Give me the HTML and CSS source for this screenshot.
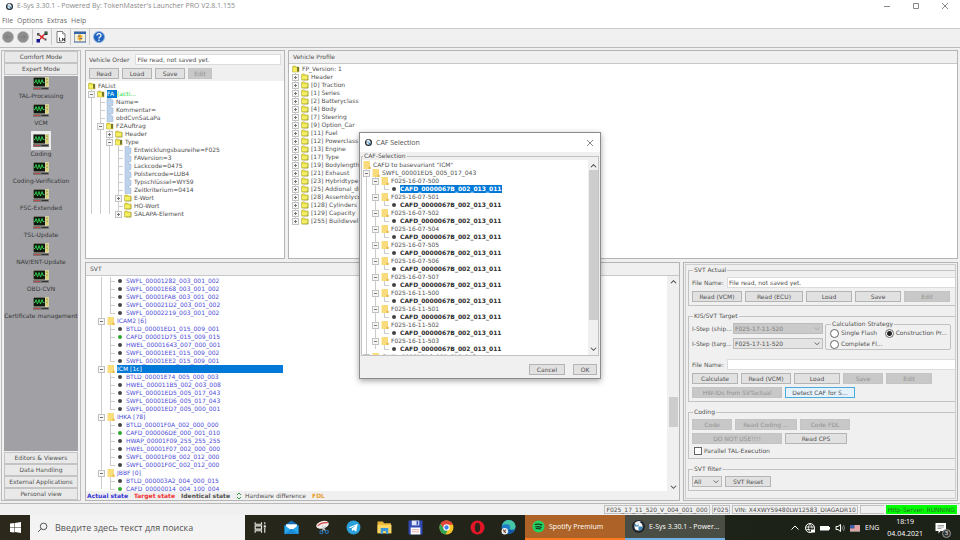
FILE: index.html
```html
<!DOCTYPE html>
<html lang="en">

<head>
    <meta charset="UTF-8">
    <meta name="viewport" content="width=device-width, initial-scale=1.0">
    <title>E-Sys 3.30.1</title>
    <link rel="stylesheet" href="styles.css">
</head>

<body>
    <!-- Shared icons -->
    <svg class="sprites" width="0" height="0" aria-hidden="true">
        <symbol id="bmw" viewBox="0 0 16 16">
            <circle cx="8" cy="8" r="8" fill="#20262c"/>
            <circle cx="8" cy="8" r="5" fill="#fff"/>
            <path d="M8 8V3a5 5 0 0 0-5 5zM8 8v5a5 5 0 0 0 5-5z" fill="#3f86b8"/>
            <path d="M3 4q4-4 8-2L6 7z" fill="#e8eef2"/>
        </symbol>
        <symbol id="folder" viewBox="0 0 16 14">
            <path d="M1 3l1-2h5l1 2h6v10H1z" fill="#e6dc3c" stroke="#a9a23a"/>
            <path d="M2 5h11v7H2z" fill="#f4ee62"/>
            <path d="M14 4v9H3" fill="none" stroke="#8a8530"/>
        </symbol>
        <symbol id="opened" viewBox="0 0 16 14">
            <path d="M1 3l1-2h5l1 2h6v10H1z" fill="#e6dc3c" stroke="#a9a23a"/>
            <path d="M2 5h8v7H2z" fill="#f4ee62"/>
            <path d="M10 3h4v9h-4z" fill="#77782c"/>
        </symbol>
        <symbol id="yfolder" viewBox="0 0 14 16">
            <path d="M0 0h13v12h1v4H0z" fill="#fbdc7c"/>
            <path d="M10 11h4v5h-4z" fill="#e3b851"/>
        </symbol>
        <symbol id="doc" viewBox="0 0 14 16">
            <path d="M1 1h8l4 4v10H1z" fill="#bdd2ec" stroke="#9ab0cc"/>
            <path d="M9 1v4h4" fill="#f4f8fc" stroke="#9ab0cc"/>
        </symbol>
        <symbol id="dot" viewBox="0 0 14 16">
            <circle cx="7" cy="8" r="4" fill="currentColor"/>
        </symbol>
        <symbol id="scope" viewBox="0 0 32 26">
            <path d="M0 0h32v26H0z" fill="#d5d0c2"/>
            <path d="M1 1h23v18H1z" fill="#101810"/>
            <path d="M2 11h2l2-6 3 9 3-9 3 9 3-9 2 6h3" fill="none" stroke="#2fc74c" stroke-width="2"/>
            <path d="M25 1h6v18h-6z" fill="#d9d577"/>
            <path d="M27 3h2v3h-2zM27 9h2v3h-2z" fill="#8c8a50"/>
            <path d="M0 20h32v6H0z" fill="#777"/>
            <path d="M2 22h12v2H2z" fill="#c14646"/>
            <path d="M17 22h13v2H17z" fill="#333"/>
        </symbol>
        <symbol id="up" viewBox="0 0 8 8"><path d="M1 6l3-3 3 3" fill="none" stroke="#444" stroke-width="1.2"/></symbol>
        <symbol id="down" viewBox="0 0 8 8"><path d="M1 2l3 3 3-3" fill="none" stroke="#555" stroke-width="1.2"/></symbol>
    </svg>

    <header class="titlebar">
        <svg class="app-icon"><use href="#bmw"/></svg>
        <h1>E-Sys 3.30.1 - Powered By: TokenMaster's Launcher PRO V2.8.1.155</h1>
        <div class="window-buttons">
            <button aria-label="Minimize"><svg viewBox="0 0 8 8"><path d="M1 4.5h6"/></svg></button>
            <button aria-label="Maximize"><svg viewBox="0 0 8 8"><path d="M1.5 1.5h5v5h-5z"/></svg></button>
            <button aria-label="Close"><svg viewBox="0 0 8 8"><path d="M1 1l6 6M7 1L1 7"/></svg></button>
        </div>
    </header>

    <nav class="menu">
        <a href="#">File</a>
        <a href="#">Options</a>
        <a href="#">Extras</a>
        <a href="#">Help</a>
    </nav>

    <div class="toolbar">
        <button aria-label="Back"><svg viewBox="0 0 24 24"><circle cx="12" cy="12" r="11" fill="#8d8d8d" stroke="#a2a2a2"/><path d="M17 12H7m4-4l-4 4 4 4" fill="none" stroke="#7c7c7c" stroke-width="2"/></svg></button>
        <button aria-label="Forward"><svg viewBox="0 0 24 24"><circle cx="12" cy="12" r="11" fill="#8d8d8d" stroke="#a2a2a2"/><path d="M7 12h10m-4-4l4 4-4 4" fill="none" stroke="#7c7c7c" stroke-width="2"/></svg></button>
        <span class="divider"></span>
        <button aria-label="Connect"><svg viewBox="0 0 24 24"><path d="M4 7l15 10M5 20L20 4" stroke="#333" stroke-width="1.5"/><path d="M7 8l9 8M16 7l-8 9" stroke="#e02020" stroke-width="2.5"/><path d="M1 16h7v7H1z" fill="#16168c"/><path d="M17 1h6v7h-6z" fill="#222"/><path d="M18 3h4v2h-4z" fill="#3ab06a"/><path d="M2 4h5v5H2zM17 15h4v4h-4z" fill="#555"/></svg></button>
        <span class="divider"></span>
        <button aria-label="Log file"><svg viewBox="0 0 24 24"><path d="M4 1h11l5 5v17H4z" fill="#fff" stroke="#555" stroke-width="1.5"/><path d="M15 1v5h5" fill="#ccc" stroke="#555"/><path d="M9 13v7h4M15 20v-6l4 6v-6" fill="none" stroke="#222" stroke-width="1.5"/></svg></button>
        <span class="divider"></span>
        <button aria-label="Transfer"><svg viewBox="0 0 24 24"><path d="M0 2h24v20H0z" fill="#f5f0d8" stroke="#345c96" stroke-width="2"/><path d="M0 2h24v4H0z" fill="#3467aa"/><path d="M12 6l6 6h-3v2h3l-6 6-6-6h3v-2H6z" fill="#eda321"/><path d="M8 10h3M13 15h3" stroke="#3467aa" stroke-width="2"/></svg></button>
        <span class="divider"></span>
        <button aria-label="Help"><svg viewBox="0 0 24 24"><circle cx="12" cy="12" r="11" fill="#2063bd" stroke="#8fb4e2" stroke-width="2"/><path d="M8 9q0-4 4-4t4 4q0 2-2 3t-2 3M12 17v3" fill="none" stroke="#fff" stroke-width="2.5"/></svg></button>
    </div>

    <main class="workspace">
        <!-- Left navigation -->
        <aside class="sidebar">
            <button class="mode">Comfort Mode</button>
            <button class="mode">Expert Mode</button>
            <div class="modules">
                <button class="module"><svg><use href="#scope"/></svg>TAL-Processing</button>
                <button class="module"><svg><use href="#scope"/></svg>VCM</button>
                <button class="module active"><span><svg><use href="#scope"/></svg></span>Coding</button>
                <button class="module"><svg><use href="#scope"/></svg>Coding-Verification</button>
                <button class="module"><svg><use href="#scope"/></svg>FSC-Extended</button>
                <button class="module"><svg><use href="#scope"/></svg>TSL-Update</button>
                <button class="module"><svg><use href="#scope"/></svg>NAV/ENT-Update</button>
                <button class="module"><svg><use href="#scope"/></svg>OBD-CVN</button>
                <button class="module"><svg><use href="#scope"/></svg>Certificate management</button>
            </div>
            <button class="mode">Editors &amp; Viewers</button>
            <button class="mode">Data Handling</button>
            <button class="mode">External Applications</button>
            <button class="mode">Personal view</button>
        </aside>

        <div class="panels">
            <div class="top-panels">
                <section class="panel">
                    <div class="order">
                        <div class="line">
                            <label for="order">Vehicle Order</label>
                            <input id="order" type="text" value="File read, not saved yet.">
                        </div>
                        <div class="line">
                            <button class="btn w30">Read</button>
                            <button class="btn w30">Load</button>
                            <button class="btn w30">Save</button>
                            <button class="btn w24" disabled>Edit</button>
                        </div>
                    </div>
                    <div class="tree fa-tree">
                        <div class="node root"><svg><use href="#opened"/></svg>FAList</div>
                        <ul>
                            <li>
                                <div class="node open"><svg><use href="#opened"/></svg><b class="picked">FA</b><span class="note">[acti...</span></div>
                                <ul>
                                    <li><div class="node"><svg><use href="#doc"/></svg>Name=</div></li>
                                    <li><div class="node"><svg><use href="#doc"/></svg>Kommentar=</div></li>
                                    <li><div class="node"><svg><use href="#doc"/></svg>obdCvnSaLaPa</div></li>
                                    <li>
                                        <div class="node open"><svg><use href="#opened"/></svg>FZAuftrag</div>
                                        <ul>
                                            <li><div class="node closed"><svg><use href="#folder"/></svg>Header</div></li>
                                            <li>
                                                <div class="node open"><svg><use href="#opened"/></svg>Type</div>
                                                <ul>
                                                    <li><div class="node"><svg><use href="#doc"/></svg>Entwicklungsbaureihe=F025</div></li>
                                                    <li><div class="node"><svg><use href="#doc"/></svg>FAVersion=3</div></li>
                                                    <li><div class="node"><svg><use href="#doc"/></svg>Lackcode=0475</div></li>
                                                    <li><div class="node"><svg><use href="#doc"/></svg>Polstercode=LUB4</div></li>
                                                    <li><div class="node"><svg><use href="#doc"/></svg>Typschlüssel=WY59</div></li>
                                                    <li><div class="node"><svg><use href="#doc"/></svg>Zeitkriterium=0414</div></li>
                                                    <li><div class="node closed"><svg><use href="#folder"/></svg>E-Wort</div></li>
                                                    <li><div class="node"><svg><use href="#folder"/></svg>HO-Wort</div></li>
                                                    <li><div class="node closed"><svg><use href="#folder"/></svg>SALAPA-Element</div></li>
                                                </ul>
                                            </li>
                                        </ul>
                                    </li>
                                </ul>
                            </li>
                        </ul>
                    </div>
                </section>

                <section class="panel">
                    <h2>Vehicle Profile</h2>
                    <div class="tree profile-tree">
                        <div class="node root"><svg><use href="#opened"/></svg>FP_Version: 1</div>
                        <ul>
                            <li><div class="node closed"><svg><use href="#folder"/></svg>Header</div></li>
                            <li><div class="node closed"><svg><use href="#folder"/></svg>[0] Traction</div></li>
                            <li><div class="node closed"><svg><use href="#folder"/></svg>[1] Series</div></li>
                            <li><div class="node closed"><svg><use href="#folder"/></svg>[2] Batteryclass</div></li>
                            <li><div class="node closed"><svg><use href="#folder"/></svg>[4] Body</div></li>
                            <li><div class="node closed"><svg><use href="#folder"/></svg>[7] Steering</div></li>
                            <li><div class="node closed"><svg><use href="#folder"/></svg>[9] Option_Car</div></li>
                            <li><div class="node closed"><svg><use href="#folder"/></svg>[11] Fuel</div></li>
                            <li><div class="node closed"><svg><use href="#folder"/></svg>[12] Powerclass</div></li>
                            <li><div class="node closed"><svg><use href="#folder"/></svg>[13] Engine</div></li>
                            <li><div class="node closed"><svg><use href="#folder"/></svg>[17] Type</div></li>
                            <li><div class="node closed"><svg><use href="#folder"/></svg>[19] Bodylength</div></li>
                            <li><div class="node closed"><svg><use href="#folder"/></svg>[21] Exhaust</div></li>
                            <li><div class="node closed"><svg><use href="#folder"/></svg>[23] Hybridtype</div></li>
                            <li><div class="node closed"><svg><use href="#folder"/></svg>[25] Addional_dif</div></li>
                            <li><div class="node closed"><svg><use href="#folder"/></svg>[28] Assemblycou</div></li>
                            <li><div class="node closed"><svg><use href="#folder"/></svg>[128] Cylinders</div></li>
                            <li><div class="node closed"><svg><use href="#folder"/></svg>[129] Capacity</div></li>
                            <li><div class="node closed"><svg><use href="#folder"/></svg>[255] Buildlevel</div></li>
                        </ul>
                    </div>
                </section>
            </div>

            <div class="bottom-panels">
                <section class="panel">
                    <h2>SVT</h2>
                    <div class="scroller">
                        <div class="tree svt-tree">
                            <ul>
                                <li>
                                    <ul>
                                        <li><div class="node"><svg><use href="#dot"/></svg>SWFL_00001282_003_001_002</div></li>
                                        <li><div class="node"><svg><use href="#dot"/></svg>SWFL_00001E68_003_001_002</div></li>
                                        <li><div class="node"><svg><use href="#dot"/></svg>SWFL_00001FAB_003_001_002</div></li>
                                        <li><div class="node"><svg><use href="#dot"/></svg>SWFL_000021D2_003_001_002</div></li>
                                        <li><div class="node"><svg><use href="#dot"/></svg>SWFL_00002219_003_001_002</div></li>
                                    </ul>
                                </li>
                                <li>
                                    <div class="node open"><svg><use href="#yfolder"/></svg>ICAM2 [6]</div>
                                    <ul>
                                        <li><div class="node"><svg><use href="#dot"/></svg>BTLD_00001ED1_015_009_001</div></li>
                                        <li><div class="node"><svg class="green"><use href="#dot"/></svg>CAFD_00001D75_015_009_015</div></li>
                                        <li><div class="node"><svg><use href="#dot"/></svg>HWEL_00001643_007_000_001</div></li>
                                        <li><div class="node"><svg><use href="#dot"/></svg>SWFL_00001EE1_015_009_002</div></li>
                                        <li><div class="node"><svg><use href="#dot"/></svg>SWFL_00001EE2_015_009_001</div></li>
                                    </ul>
                                </li>
                                <li>
                                    <div class="node open"><svg><use href="#yfolder"/></svg><b class="picked wide">ICM [1c]</b></div>
                                    <ul>
                                        <li><div class="node"><svg><use href="#dot"/></svg>BTLD_00001E74_005_000_003</div></li>
                                        <li><div class="node"><svg><use href="#dot"/></svg>HWEL_000011B5_002_003_008</div></li>
                                        <li><div class="node"><svg><use href="#dot"/></svg>SWFL_00001ED5_005_017_043</div></li>
                                        <li><div class="node"><svg><use href="#dot"/></svg>SWFL_00001ED6_005_017_043</div></li>
                                        <li><div class="node"><svg><use href="#dot"/></svg>SWFL_00001ED7_005_000_001</div></li>
                                    </ul>
                                </li>
                                <li>
                                    <div class="node open"><svg><use href="#yfolder"/></svg>IHKA [78]</div>
                                    <ul>
                                        <li><div class="node"><svg><use href="#dot"/></svg>BTLD_00001F0A_002_000_000</div></li>
                                        <li><div class="node"><svg class="green"><use href="#dot"/></svg>CAFD_000006DE_000_001_010</div></li>
                                        <li><div class="node"><svg><use href="#dot"/></svg>HWAP_00001F09_255_255_255</div></li>
                                        <li><div class="node"><svg><use href="#dot"/></svg>HWEL_00001F07_002_000_000</div></li>
                                        <li><div class="node"><svg><use href="#dot"/></svg>SWFL_00001F0B_002_012_000</div></li>
                                        <li><div class="node"><svg><use href="#dot"/></svg>SWFL_00001F0C_002_012_000</div></li>
                                    </ul>
                                </li>
                                <li>
                                    <div class="node open"><svg><use href="#yfolder"/></svg>JBBF [0]</div>
                                    <ul>
                                        <li><div class="node"><svg><use href="#dot"/></svg>BTLD_000003A2_004_000_015</div></li>
                                        <li><div class="node"><svg class="green"><use href="#dot"/></svg>CAFD_00000014_004_100_004</div></li>
                                    </ul>
                                </li>
                            </ul>
                        </div>
                        <div class="scrollbar svt-bar">
                            <svg><use href="#up"/></svg>
                            <span class="thumb"></span>
                            <svg><use href="#down"/></svg>
                        </div>
                    </div>
                    <div class="legend">
                        <b class="actual">Actual state</b>
                        <b class="target">Target state</b>
                        <b>Identical state</b>
                        <span><svg viewBox="0 0 12 16"><path d="M2 6l4-4 4 4M2 10l4 4 4-4" fill="none" stroke="#2c9a3a" stroke-width="2"/></svg>Hardware difference</span>
                        <b class="fdl">FDL</b>
                    </div>
                </section>

                <section class="panel settings">
                    <fieldset>
                        <legend>SVT Actual</legend>
                        <div class="line">
                            <label class="name" for="actual-file">File Name:</label>
                            <input id="actual-file" type="text" value="File read, not saved yet.">
                        </div>
                        <div class="line">
                            <button class="btn w50">Read (VCM)</button>
                            <button class="btn w58">Read (ECU)</button>
                            <button class="btn w46">Load</button>
                            <button class="btn w46">Save</button>
                            <button class="btn w46" disabled>Edit</button>
                        </div>
                    </fieldset>

                    <fieldset>
                        <legend>KIS/SVT Target</legend>
                        <div class="steps">
                            <div class="step-list">
                                <div class="line">
                                    <label class="step" for="ship">I-Step (ship...</label>
                                    <span class="select off"><select id="ship" disabled><option>F025-17-11-520</option></select><svg><use href="#down"/></svg></span>
                                </div>
                                <div class="line">
                                    <label class="step" for="targ">I-Step (targ...</label>
                                    <span class="select"><select id="targ"><option>F025-17-11-520</option></select><svg><use href="#down"/></svg></span>
                                </div>
                            </div>
                            <fieldset class="strategy">
                                <legend>Calculation Strategy</legend>
                                <label><input type="radio" name="strategy">Single Flash</label>
                                <label><input type="radio" name="strategy" checked>Construction Pr...</label>
                                <label><input type="radio" name="strategy">Complete Fl...</label>
                            </fieldset>
                        </div>
                        <div class="line">
                            <label class="name" for="target-file">File Name:</label>
                            <input id="target-file" type="text">
                        </div>
                        <div class="line">
                            <button class="btn w46">Calculate</button>
                            <button class="btn w50">Read (VCM)</button>
                            <button class="btn w46">Load</button>
                            <button class="btn w40" disabled>Save</button>
                            <button class="btn w46" disabled>Edit</button>
                        </div>
                        <div class="line">
                            <button class="btn w90" disabled>HW-IDs from SVTactual</button>
                            <button class="btn w70 hot">Detect CAF for S...</button>
                        </div>
                    </fieldset>

                    <fieldset>
                        <legend>Coding</legend>
                        <div class="line">
                            <button class="btn w40" disabled>Code</button>
                            <button class="btn w62" disabled>Read Coding ...</button>
                            <button class="btn w50" disabled>Code FDL</button>
                        </div>
                        <div class="line">
                            <button class="btn w90" disabled>DO NOT USE!!!!</button>
                            <button class="btn w62">Read CPS</button>
                        </div>
                        <label class="check"><input type="checkbox">Parallel TAL-Execution</label>
                    </fieldset>

                    <fieldset>
                        <legend>SVT filter</legend>
                        <div class="line">
                            <span class="select w30"><select aria-label="SVT filter"><option>All</option></select><svg><use href="#down"/></svg></span>
                            <button class="btn w46">SVT Reset</button>
                        </div>
                    </fieldset>
                </section>
            </div>
        </div>
    </main>

    <footer class="statusbar">
        <span>F025_17_11_520_V_004_001_000</span>
        <span>F025</span>
        <span>VIN: X4XWY59480LW12583_DIAGADR10</span>
        <span class="blank"></span>
        <span class="server">Http-Server: RUNNING</span>
    </footer>

    <!-- Windows taskbar -->
    <div class="taskbar">
        <button class="start" aria-label="Start"><svg viewBox="0 0 22 22"><path d="M0 3l9-1v9H0zM10 2l12-2v11H10zM0 12h9v9l-9-1zM10 12h12v10l-12-2z" fill="#fff"/></svg></button>
        <label class="search">
            <svg viewBox="0 0 20 20"><circle cx="12" cy="8" r="6" fill="none" stroke="#333" stroke-width="1.5"/><path d="M8 12l-6 6" stroke="#333" stroke-width="1.5"/></svg>
            <input type="text" placeholder="Введите здесь текст для поиска">
        </label>
        <div class="apps">
            <button aria-label="Task view"><svg viewBox="0 0 28 28"><path d="M4 4v4h12V4M4 24v-4h12v4M4 11h12v6H4zM22 4v4M22 15v9" fill="none" stroke="#eee" stroke-width="2"/><path d="M20 10h4v4h-4z" fill="#eee"/></svg></button>
            <button aria-label="Mail"><svg viewBox="0 0 28 28"><path d="M1 10L14 1l13 9v16H1z" fill="#1470b8"/><path d="M4 8h20v9H4z" fill="#fff"/><path d="M1 10l13 9 13-9v16H1z" fill="#27a8ec"/><path d="M1 26l13-9 13 9z" fill="#1c8bd6"/></svg></button>
            <button aria-label="Snipping tool"><svg viewBox="0 0 28 28"><ellipse cx="14" cy="9" rx="12" ry="7" fill="#f2eeee" transform="rotate(-15 14 9)"/><path d="M5 11Q12 4 24 5" fill="none" stroke="#d34040" stroke-width="2"/><path d="M13 10l7 11M20 11l-7 10" stroke="#ccc" stroke-width="2"/><circle cx="12" cy="23" r="3" fill="none" stroke="#2878bd" stroke-width="2"/><circle cx="22" cy="22" r="3" fill="none" stroke="#2878bd" stroke-width="2"/></svg></button>
            <button aria-label="Telegram"><svg viewBox="0 0 28 28"><circle cx="14" cy="14" r="13" fill="#2aa0dc"/><path d="M5 14l17-7-3 15-5-4-3 3v-5l8-6-10 5z" fill="#fff"/></svg></button>
            <button aria-label="Explorer"><svg viewBox="0 0 28 28"><path d="M1 3h10l2 3h13v18H1z" fill="#eab637"/><path d="M1 9h26v16H1z" fill="#fcd662"/><path d="M7 15h14v11h-4v-5h-6v5H7z" fill="#3a97dc"/></svg></button>
            <button aria-label="Total Commander"><svg viewBox="0 0 28 28"><path d="M1 1h26v26H1z" fill="#3149b5"/><path d="M7 1h14v9H7z" fill="#dfe5f4"/><path d="M16 2h3v7h-3z" fill="#3149b5"/><path d="M5 14h18v13H5z" fill="#fff"/><path d="M7 18h14M7 22h14" stroke="#d66"/></svg></button>
            <button aria-label="Chrome"><svg viewBox="0 0 28 28"><circle cx="14" cy="14" r="13" fill="#f4c527"/><path d="M3 7a13 13 0 0 1 23 2H14L9 17z" fill="#e2443a"/><path d="M3 7l6 10 7 3-4 7A13 13 0 0 1 3 7z" fill="#35a354"/><circle cx="14" cy="14" r="6" fill="#fff"/><circle cx="14" cy="14" r="4" fill="#4080e8"/></svg></button>
            <button aria-label="Opera"><svg viewBox="0 0 28 28"><circle cx="14" cy="14" r="13" fill="#e31627"/><ellipse cx="14" cy="14" rx="5" ry="9" fill="#2a261b"/></svg></button>
            <button aria-label="Edge"><svg viewBox="0 0 28 28"><circle cx="14" cy="13" r="13" fill="#1d7ec9"/><path d="M2 10Q6 0 15 0c8 0 13 7 12 13-1 5-7 6-11 4 3-5 0-9-5-9-4 0-7 1-9 2z" fill="#45c7a5"/><path d="M15 17q5 4 11 1-4 8-12 8z" fill="#1254a0"/><circle cx="7" cy="21" r="6" fill="#eee"/><path d="M4 18l5 6M9 18l-4 5" stroke="#774f3d" stroke-width="2"/></svg></button>
        </div>
        <button class="task spotify"><svg viewBox="0 0 28 28"><circle cx="14" cy="14" r="13" fill="#20d362"/><path d="M6 10q8-3 16 1M7 15q7-2 14 1M8 19q6-2 11 1" fill="none" stroke="#183d22" stroke-width="2.5"/></svg>Spotify Premium</button>
        <button class="task esys"><svg><use href="#bmw"/></svg>E-Sys 3.30.1 - Power...</button>
        <div class="tray">
            <svg viewBox="0 0 20 20"><path d="M3 13l7-7 7 7" fill="none" stroke="#fff" stroke-width="2"/></svg>
            <svg viewBox="0 0 20 20"><circle cx="10" cy="10" r="9" fill="none" stroke="#fff" stroke-width="2"/><path d="M2 8h16M2 13h9M10 2q-7 8 0 16M10 2q5 4 4 9" fill="none" stroke="#fff" stroke-width="1.5"/><path d="M12 13h8v6h-8z" fill="#fff"/></svg>
            <svg viewBox="0 0 20 20"><path d="M0 6h18v9H0zM18 8h2v5h-2z" fill="#fff"/></svg>
            <svg viewBox="0 0 20 20"><path d="M2 7h4l5-4v14l-5-4H2z" fill="none" stroke="#fff" stroke-width="2"/><path d="M14 7q2 3 0 6M17 4q4 6 0 12" fill="none" stroke="#aaa" stroke-width="1.5"/></svg>
            <svg viewBox="0 0 20 20"><path d="M0 4h20v13H0z" fill="#eee"/><path d="M0 6h20M0 10h20M0 14h20" stroke="#d65757" stroke-width="2"/><path d="M0 4h9v7H0z" fill="#3d5fa8"/></svg>
            <span>ENG</span>
            <time>18:19<br>04.04.2021</time>
            <button class="notices" aria-label="Notifications"><svg viewBox="0 0 24 24"><path d="M1 2h21v16H11l-4 5v-5H1z" fill="#fff"/><path d="M5 7h13M5 10h13M5 13h8" stroke="#444"/></svg><span class="badge">3</span></button>
        </div>
    </div>

    <!-- CAF selection window -->
    <div class="dialog" role="dialog" aria-labelledby="caf-title">
        <div class="dialog-title">
            <svg class="app-icon"><use href="#bmw"/></svg>
            <h2 id="caf-title">CAF Selection</h2>
            <button aria-label="Close"><svg viewBox="0 0 8 8"><path d="M1 1l6 6M7 1L1 7"/></svg></button>
        </div>
        <fieldset>
            <legend>CAF-Selection</legend>
            <div class="scroller">
                <div class="tree caf-tree">
                    <div class="node root"><svg><use href="#yfolder"/></svg>CAFD to basevariant "ICM"</div>
                    <ul>
                        <li>
                            <div class="node open"><svg><use href="#yfolder"/></svg>SWFL_00001ED5_005_017_043</div>
                            <ul>
                                <li>
                                    <div class="node open"><svg><use href="#yfolder"/></svg>F025-16-07-500</div>
                                    <ul><li><div class="node"><svg><use href="#dot"/></svg><b class="picked">CAFD_0000067B_002_013_011</b></div></li></ul>
                                </li>
                                <li>
                                    <div class="node open"><svg><use href="#yfolder"/></svg>F025-16-07-501</div>
                                    <ul><li><div class="node"><svg><use href="#dot"/></svg><b>CAFD_0000067B_002_013_011</b></div></li></ul>
                                </li>
                                <li>
                                    <div class="node open"><svg><use href="#yfolder"/></svg>F025-16-07-502</div>
                                    <ul><li><div class="node"><svg><use href="#dot"/></svg><b>CAFD_0000067B_002_013_011</b></div></li></ul>
                                </li>
                                <li>
                                    <div class="node open"><svg><use href="#yfolder"/></svg>F025-16-07-504</div>
                                    <ul><li><div class="node"><svg><use href="#dot"/></svg><b>CAFD_0000067B_002_013_011</b></div></li></ul>
                                </li>
                                <li>
                                    <div class="node open"><svg><use href="#yfolder"/></svg>F025-16-07-505</div>
                                    <ul><li><div class="node"><svg><use href="#dot"/></svg><b>CAFD_0000067B_002_013_011</b></div></li></ul>
                                </li>
                                <li>
                                    <div class="node open"><svg><use href="#yfolder"/></svg>F025-16-07-506</div>
                                    <ul><li><div class="node"><svg><use href="#dot"/></svg><b>CAFD_0000067B_002_013_011</b></div></li></ul>
                                </li>
                                <li>
                                    <div class="node open"><svg><use href="#yfolder"/></svg>F025-16-07-507</div>
                                    <ul><li><div class="node"><svg><use href="#dot"/></svg><b>CAFD_0000067B_002_013_011</b></div></li></ul>
                                </li>
                                <li>
                                    <div class="node open"><svg><use href="#yfolder"/></svg>F025-16-11-500</div>
                                    <ul><li><div class="node"><svg><use href="#dot"/></svg><b>CAFD_0000067B_002_013_011</b></div></li></ul>
                                </li>
                                <li>
                                    <div class="node open"><svg><use href="#yfolder"/></svg>F025-16-11-501</div>
                                    <ul><li><div class="node"><svg><use href="#dot"/></svg><b>CAFD_0000067B_002_013_011</b></div></li></ul>
                                </li>
                                <li>
                                    <div class="node open"><svg><use href="#yfolder"/></svg>F025-16-11-502</div>
                                    <ul><li><div class="node"><svg><use href="#dot"/></svg><b>CAFD_0000067B_002_013_011</b></div></li></ul>
                                </li>
                                <li>
                                    <div class="node open"><svg><use href="#yfolder"/></svg>F025-16-11-503</div>
                                    <ul><li><div class="node"><svg><use href="#dot"/></svg><b>CAFD_0000067B_002_013_011</b></div></li></ul>
                                </li>
                            </ul>
                        </li>
                        <li><div class="node open"><svg><use href="#yfolder"/></svg>SWFL_00001ED6_005_017_043</div></li>
                    </ul>
                </div>
                <div class="scrollbar caf-bar">
                    <svg><use href="#up"/></svg>
                    <span class="thumb"></span>
                    <svg><use href="#down"/></svg>
                </div>
            </div>
        </fieldset>
        <div class="dialog-actions">
            <button class="btn w36">Cancel</button>
            <button class="btn w24">OK</button>
        </div>
    </div>
</body>

</html>
```

FILE: styles.css
```css
*,
*::before {
    box-sizing: border-box;
}

body {
    display: flex;
    flex-direction: column;
    height: 100vh;
    margin: 0;
    overflow: hidden;
    background-color: #f0f0f0;
    color: #505050;
    font-family: "DejaVu Sans", sans-serif;
    font-size: 6px;
    line-height: 8px;
}

button,
input,
select {
    margin: 0;
    padding: 0;
    border: none;
    background: none;
    color: inherit;
    font: inherit;
}

h1,
h2 {
    margin: 0;
    font-size: inherit;
    font-weight: normal;
}

svg {
    display: block;
    flex: none;
}

.sprites {
    position: absolute;
}

/* Title bar and menu */
.titlebar {
    display: flex;
    align-items: center;
    height: 12px;
    padding-left: 6px;
    background-color: #fff;
    color: #8a8a8a;
    font-family: "Open Sans", sans-serif;
    font-size: 7px;
}

.app-icon {
    width: 7px;
    height: 7px;
    margin-right: 4px;
}

.window-buttons {
    display: flex;
    gap: 21px;
    margin-left: auto;
    padding-right: 11px;
}

.window-buttons svg,
.dialog-title button svg {
    width: 8px;
    height: 8px;
    fill: none;
    stroke: #888;
    stroke-width: 1;
}

.menu {
    display: flex;
    align-items: center;
    gap: 4px;
    height: 16px;
    padding: 2px 0 0 2px;
    background-color: #fff;
    font-family: "Open Sans", sans-serif;
    font-size: 7px;
}

.menu a {
    color: #6c6c6c;
    text-decoration: none;
}

/* Toolbar */
.toolbar {
    display: flex;
    align-items: center;
    gap: 3px;
    height: 20px;
    padding: 0 0 2px 2px;
    border-top: 1px solid #ccc;
    border-bottom: 1px solid #bbb;
}

.toolbar svg {
    width: 12px;
    height: 12px;
}

.divider {
    width: 1px;
    height: 16px;
    background-color: #c6c6c6;
}

/* Work area */
.workspace {
    display: flex;
    flex: 1;
    gap: 4px;
    min-height: 0;
    padding: 2px 2px 2px 1px;
}

.sidebar {
    display: flex;
    flex-direction: column;
    width: 80px;
    padding: 0 2px;
    border: 1px solid #bdbdbd;
}

.mode {
    height: 12px;
    flex: none;
    border: 1px solid #fff;
    outline: 1px solid #c4c4c4;
    outline-offset: -1px;
    background-color: #e9e9e9;
    text-align: center;
}

.modules {
    display: flex;
    flex: 1;
    flex-direction: column;
    gap: 4px;
    min-height: 0;
    margin: 1px 0;
    padding-top: 1px;
    background-color: #a0a0a5;
}

.module {
    display: flex;
    flex-direction: column;
    align-items: center;
    gap: 2px;
    color: #383838;
    white-space: nowrap;
}

.module svg {
    width: 16px;
    height: 13px;
}

.module.active {
    gap: 0;
}

.module.active span {
    padding: 3px 2px;
    background-color: #ececec;
}

.panels {
    display: grid;
    flex: 1;
    grid-template-rows: minmax(0, 209fr) minmax(0, 239fr);
    gap: 3px;
    min-width: 0;
}

.top-panels,
.bottom-panels {
    display: grid;
    gap: 3px;
    min-height: 0;
}

.top-panels {
    grid-template-columns: 200px minmax(0, 1fr);
}

.bottom-panels {
    grid-template-columns: minmax(0, 1fr) 275px;
}

.panel {
    display: flex;
    flex-direction: column;
    min-width: 0;
    min-height: 0;
    border: 1px solid #b4b4b4;
}

.panel h2 {
    padding: 2px 4px;
    border-bottom: 1px solid #c8c8c8;
}

.order {
    display: flex;
    flex-direction: column;
    gap: 3px;
    padding: 3px 3px 2px;
}

.order label {
    padding-right: 3px;
}

.line {
    display: flex;
    align-items: center;
    gap: 3px;
}

.line input {
    flex: 1;
    min-width: 0;
    height: 11px;
    padding: 0 1px;
    border: 1px solid #dcdcdc;
    background-color: #fff;
}

/* Buttons */
.btn {
    height: 11px;
    border: 1px solid #b4b4b4;
    background-color: #e1e1e1;
    text-align: center;
    line-height: 8px;
    white-space: nowrap;
}

.btn:disabled {
    border-color: #c4c4c4;
    background-color: #c8c8c8;
    color: #929292;
}

.btn.hot {
    border-color: #4bacdc;
    background-color: #e5f1fb;
}

.w24 { width: 24px; }
.w30 { width: 30px; }
.w36 { width: 36px; }
.w40 { width: 40px; }
.w46 { width: 46px; }
.w50 { width: 50px; }
.w58 { width: 58px; }
.w62 { width: 62px; }
.w70 { width: 70px; }
.w90 { width: 90px; }

/* Trees */
.tree {
    flex: 1;
    min-width: 0;
    min-height: 0;
    overflow: hidden;
    background-color: #fff;
}

.tree ul {
    margin: 0;
    padding: 0;
    background: linear-gradient(#ccc, #ccc) 3px 0 / 1px calc(100% - 4px) no-repeat;
    list-style: none;
}

.tree ul ul {
    margin-left: 9px;
}

.node {
    display: flex;
    align-items: center;
    height: 8px;
    white-space: nowrap;
}

.node svg {
    width: 8px;
    height: 8px;
    margin-right: 2px;
    color: #444;
}

.node svg.green {
    color: #2fa82f;
}

.node::before {
    width: 9px;
    height: 7px;
    flex: none;
    background: linear-gradient(#ccc, #ccc) 3px 3px / 5px 1px no-repeat;
    content: "";
}

.node.root::before {
    display: none;
}

/* Expander box with a minus or a plus */
.node.open::before,
.node.closed::before {
    width: 7px;
    margin-right: 2px;
    border: 1px solid #c2c2c2;
    background: linear-gradient(#777, #777) 1px 2px / 3px 1px no-repeat #f6f6f6;
}

.node.closed::before {
    background: linear-gradient(#777, #777) 1px 2px / 3px 1px no-repeat,
        linear-gradient(#777, #777) 2px 1px / 1px 3px no-repeat #f6f6f6;
}

.picked {
    background-color: #0078d7;
    color: #fff;
}

.fa-tree {
    padding: 1px 0 0 2px;
}

.fa-tree .picked {
    padding-right: 3px;
    font-weight: normal;
}

.note {
    color: #24dc38;
}

.profile-tree {
    padding: 1px 0 0 3px;
}

.svt-tree {
    padding: 1px 0 0 12px;
    color: #4c4cd8;
}

.picked.wide {
    width: 166px;
    font-weight: normal;
}

.caf-tree {
    padding: 1px 0 0 1px;
}

.caf-tree b {
    color: #2e2e2e;
}

.caf-tree .picked {
    color: #fff;
}

/* Scrollbars */
.scroller {
    display: flex;
    flex: 1;
    min-height: 0;
}

.scrollbar {
    display: flex;
    flex-direction: column;
    align-items: center;
    width: 10px;
    padding: 2px 0;
}

.scrollbar svg {
    width: 7px;
    height: 7px;
}

.scrollbar .thumb {
    width: 9px;
    background-color: #cdcdcd;
}

.svt-bar {
    width: 12px;
    padding-bottom: 0;
}

.svt-bar .thumb {
    height: 30px;
    margin: auto 0 57px;
}

.caf-bar .thumb {
    height: 150px;
    margin-top: 1px;
    margin-bottom: auto;
}

.legend {
    display: flex;
    gap: 6px;
    padding: 1px 0 0 1px;
}

.legend span {
    display: flex;
    align-items: center;
    gap: 3px;
}

.legend svg {
    width: 6px;
    height: 8px;
}

.legend .actual { color: #3434d4; }
.legend .target { color: #f03030; }
.legend .fdl { color: #e8a030; }

/* Right hand settings */
.settings {
    gap: 6px;
    padding: 3px 1px 3px 4px;
    outline: 1px solid #cdcdcd;
    outline-offset: -3px;
}

fieldset {
    min-width: 0;
    margin: 0;
    padding: 0;
    border: 1px solid #c2c2c2;
}

legend {
    margin-left: 1px;
    padding: 0 1px;
}

.settings > fieldset {
    display: flex;
    flex-direction: column;
    gap: 3px;
    padding: 3px 0 3px 3px;
    border-right: none;
}

.name {
    width: 32px;
    white-space: nowrap;
}

.step {
    width: 40px;
    white-space: nowrap;
}

.steps {
    display: flex;
    gap: 2px;
    margin-bottom: 6px;
}

.step-list {
    display: flex;
    flex-direction: column;
    gap: 4px;
}

.step-list .line {
    gap: 1px;
}

.select {
    display: flex;
    align-items: center;
    height: 11px;
    padding: 0 2px 0 1px;
    border: 1px solid #bcbcbc;
    background-color: #e4e4e4;
}

.step-list .select {
    width: 90px;
}

.select select {
    flex: 1;
    min-width: 0;
    appearance: none;
}

.select svg {
    width: 6px;
    height: 6px;
}

.select.off {
    background-color: #cacaca;
}

.select.off select {
    color: #808080;
    opacity: 1;
}

.select.off svg {
    opacity: 0.3;
}

.strategy {
    display: grid;
    grid-template-columns: auto auto;
    justify-content: start;
    column-gap: 2px;
    row-gap: 1px;
    width: 126px;
    height: 30px;
    margin-top: -3px;
    padding-left: 4px;
    border-radius: 2px;
}

.strategy label,
.check {
    display: flex;
    align-items: center;
    gap: 2px;
    white-space: nowrap;
}

.strategy input {
    width: 9px;
    height: 9px;
    flex: none;
    border: 1px solid #666;
    border-radius: 50%;
    background-color: #fff;
    appearance: none;
}

.strategy input:checked {
    background: radial-gradient(circle, #222 2px, #fff 3px);
}

.check {
    padding-left: 2px;
}

.check input {
    width: 8px;
    height: 8px;
    border: 1px solid #666;
    background-color: #fff;
    appearance: none;
}

/* Status bar */
.statusbar {
    display: flex;
    justify-content: flex-end;
    gap: 2px;
    height: 12px;
    padding: 1px 3px 1px 0;
    border-top: 1px solid #b8b8b8;
    white-space: nowrap;
}

.statusbar span {
    padding: 0 1px;
    border: 1px solid #c0c0c0;
}

.statusbar .blank {
    width: 24px;
    border-right: none;
}

.statusbar .server {
    border-color: #00ff00;
    background-color: #00ff00;
    color: #2c6a2c;
}

/* Taskbar */
.taskbar {
    display: flex;
    height: 25px;
    flex: none;
    background: linear-gradient(90deg, #2c281b, #1d2218 80%);
    color: #fff;
    font-family: "Open Sans", sans-serif;
    font-size: 7px;
}

.start {
    width: 30px;
    padding-left: 10px;
}

.start svg {
    width: 11px;
    height: 11px;
}

.search {
    display: flex;
    align-items: center;
    gap: 7px;
    width: 215px;
    padding-left: 7px;
    background-color: #f3f3f3;
}

.search svg {
    width: 11px;
    height: 11px;
}

.search input {
    flex: 1;
    font-size: 9px;
}

.search input::placeholder {
    color: #555;
    opacity: 1;
}

.apps {
    display: flex;
    align-items: center;
    gap: 16px;
    width: 280px;
    padding-left: 8px;
}

.apps svg {
    width: 15px;
    height: 15px;
}

.task {
    display: flex;
    align-items: center;
    gap: 4px;
    width: 100px;
    padding-left: 7px;
    border-bottom: 2px solid #ff7a20;
    background-color: #ad6327;
    white-space: nowrap;
}

.task svg {
    width: 13px;
    height: 13px;
}

.task.esys {
    border-color: #70b0e4;
    background-color: #4a4d43;
}

.tray {
    display: flex;
    align-items: center;
    gap: 5px;
    margin-left: auto;
    padding-right: 13px;
}

.tray svg {
    width: 10px;
    height: 10px;
}

.tray time {
    padding: 0 7px 0 3px;
    line-height: 12px;
    text-align: center;
}

.notices {
    position: relative;
}

.notices svg {
    width: 12px;
    height: 12px;
}

.badge {
    position: absolute;
    right: -4px;
    bottom: -4px;
    width: 9px;
    height: 9px;
    border: 1px solid #999;
    border-radius: 50%;
    background-color: #333;
    font-size: 6px;
    line-height: 7px;
    text-align: center;
}

/* CAF selection dialog */
.dialog {
    position: absolute;
    top: 132px;
    left: 359px;
    display: flex;
    flex-direction: column;
    width: 242px;
    border: 1px solid #8c8c8c;
    background-color: #f0f0f0;
    box-shadow: 0 2px 6px rgba(0, 0, 0, 0.35);
}

.dialog-title {
    display: flex;
    align-items: center;
    height: 19px;
    padding: 0 6px 0 5px;
    background-color: #fff;
    font-family: "Open Sans", sans-serif;
    font-size: 7px;
}

.dialog-title button {
    margin-left: auto;
}

.dialog fieldset {
    margin: 0 1px;
}

.dialog .scroller {
    height: 195px;
}

.dialog-actions {
    display: flex;
    justify-content: flex-end;
    gap: 8px;
    padding: 8px 3px 3px;
}
```
